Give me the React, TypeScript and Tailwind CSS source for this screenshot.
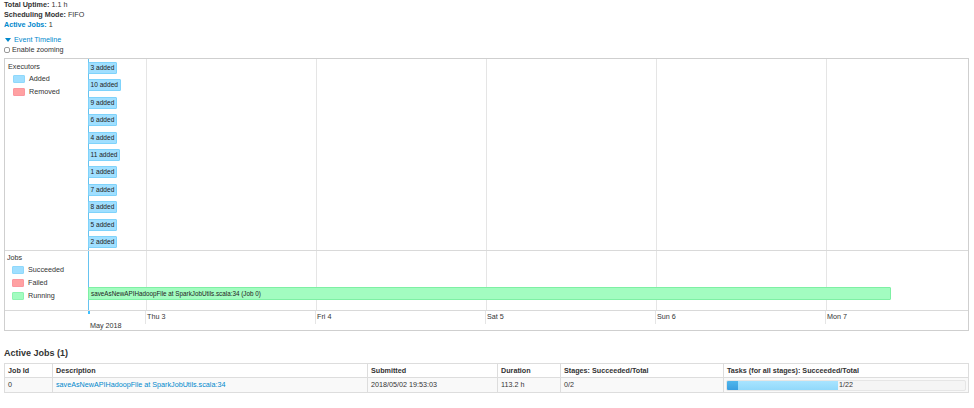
import React from 'react';

const executors = ['3', '10', '9', '6', '4', '11', '1', '7', '8', '5', '2'];
const gridLines = [57, 227, 397, 567, 737];
const axisLabels = ['Thu 3', 'Fri 4', 'Sat 5', 'Sun 6', 'Mon 7'];

const LegendItem: React.FC<{ color: string; label: string }> = ({ color, label }) => (
  <div className="flex items-center h-[13px] pl-[5px]">
    <span className={`w-[12px] h-[8px] border rounded-[1px] mr-[4px] ${color}`} />
    <span>{label}</span>
  </div>
);

const Grid: React.FC = () => (
  <>
    {gridLines.map((x) => (
      <div key={x} className="absolute top-0 bottom-0 w-px bg-[#e5e5e5]" style={{ left: x }} />
    ))}
  </>
);

export default function App() {
  return (
    <div className="w-[974px] h-[408px] overflow-hidden bg-white pl-[4px] pr-[5px] text-[7.2px] leading-[10px] text-[#333] font-['Liberation_Sans',Arial,sans-serif]">
      <ul>
        <li>
          <strong>Total Uptime:</strong> 1.1 h
        </li>
        <li>
          <strong>Scheduling Mode:</strong> FIFO
        </li>
        <li>
          <a className="text-[#0088cc]">
            <strong>Active Jobs:</strong>
          </a>{' '}
          1
        </li>
      </ul>

      <div className="mt-[5px] h-[10px] flex items-center text-[#0088cc]">
        <span className="ml-[1px] mr-[3px] w-0 h-0 border-l-[3px] border-r-[3px] border-t-[4px] border-l-transparent border-r-transparent border-t-[#0088cc]" />
        Event Timeline
      </div>
      <label className="h-[10px] flex items-center">
        <span className="w-[6px] h-[6px] border border-[#999] rounded-[2px] bg-white mr-[2px]" />
        Enable zooming
      </label>

      {/* timeline */}
      <div className="mt-[3px] border border-[#cfcfcf] flex flex-col">
        <div className="flex h-[191px]">
          <div className="w-[83px] pt-[2px] pl-[3px]">
            <div className="h-[11px] flex items-center">Executors</div>
            <LegendItem color="bg-[#A0DFFF] border-[#8fd8fb]" label="Added" />
            <LegendItem color="bg-[#FFA1A2] border-[#fb97a0]" label="Removed" />
          </div>
          <div className="relative flex-1 border-l border-[#66c3f0]">
            <Grid />
            {executors.map((n, i) => (
              <div
                key={n}
                className="absolute left-[-1px] h-[12px] px-[1.5px] flex items-center bg-[#A0DFFF] border border-[#7fd3fb] rounded-[1px] text-[6.6px] text-[#222] whitespace-nowrap"
                style={{ top: 3 + i * 17.4 }}
              >
                {n} added
              </div>
            ))}
          </div>
        </div>

        <div className="flex h-[60px] border-t border-[#d9d9d9]">
          <div className="w-[83px] pt-[1px] pl-[2px]">
            <div className="h-[11px] flex items-center">Jobs</div>
            <LegendItem color="bg-[#A0DFFF] border-[#8fd8fb]" label="Succeeded" />
            <LegendItem color="bg-[#FFA1A2] border-[#fb97a0]" label="Failed" />
            <LegendItem color="bg-[#A2FCC0] border-[#8ef3b0]" label="Running" />
          </div>
          <div className="relative flex-1 border-l border-[#66c3f0]">
            <Grid />
            <div className="absolute left-[-1px] top-[36px] w-[803px] h-[13px] px-[2px] flex items-center bg-[#A2FCC0] border border-[#7ef0a4] rounded-[1px] text-[6.3px] text-[#222] whitespace-nowrap">
              saveAsNewAPIHadoopFile at SparkJobUtils.scala:34 (Job 0)
            </div>
          </div>
        </div>

        <div className="flex h-[20px] border-t border-[#d9d9d9]">
          <div className="w-[84px]" />
          <div className="relative flex-1">
            <div className="absolute left-[-1px] top-0 w-[2px] h-[3px] bg-[#3EC0FF]" />
            {gridLines.map((x, i) => (
              <React.Fragment key={x}>
                <div className="absolute top-0 h-[13px] w-px bg-[#e5e5e5]" style={{ left: x - 1 }} />
                <div className="absolute top-[1px] text-[#333]" style={{ left: x + 1 }}>
                  {axisLabels[i]}
                </div>
              </React.Fragment>
            ))}
            <div className="absolute left-[1px] top-[10px] text-[#333]">May 2018</div>
          </div>
        </div>
      </div>

      {/* active jobs */}
      <h4 className="mt-[16px] mb-[4px] text-[9px] leading-[12px] font-bold">Active Jobs (1)</h4>
      <table className="w-[965px] table-fixed border-collapse border border-[#dddddd]">
        <colgroup>
          <col className="w-[48px]" />
          <col className="w-[315px]" />
          <col className="w-[130px]" />
          <col className="w-[63px]" />
          <col className="w-[163px]" />
          <col />
        </colgroup>
        <thead>
          <tr className="h-[14px] bg-white">
            {['Job Id', 'Description', 'Submitted', 'Duration', 'Stages: Succeeded/Total', 'Tasks (for all stages): Succeeded/Total'].map((h) => (
              <th key={h} className="border border-[#dddddd] px-[3px] text-left font-bold align-middle">
                {h}
              </th>
            ))}
          </tr>
        </thead>
        <tbody>
          <tr className="h-[15px] bg-[#f9f9f9]">
            <td className="border border-[#dddddd] px-[3px]">0</td>
            <td className="border border-[#dddddd] px-[3px] text-[#0088cc]">saveAsNewAPIHadoopFile at SparkJobUtils.scala:34</td>
            <td className="border border-[#dddddd] px-[3px]">2018/05/02 19:53:03</td>
            <td className="border border-[#dddddd] px-[3px]">113.2 h</td>
            <td className="border border-[#dddddd] px-[3px]">0/2</td>
            <td className="border border-[#dddddd] px-[2px]">
              <div className="relative h-[11px] w-[240px] bg-[#f5f5f5] border border-[#e6e6e6] rounded-[2px] overflow-hidden flex">
                <div className="w-[11px] h-full bg-[linear-gradient(#4fb6ec,#3a9fe0)]" />
                <div className="w-[100px] h-full bg-[linear-gradient(#a8e4ff,#92d9fb)]" />
                <span className="absolute inset-0 flex items-center justify-center leading-none">1/22</span>
              </div>
            </td>
          </tr>
        </tbody>
      </table>
    </div>
  );
}
